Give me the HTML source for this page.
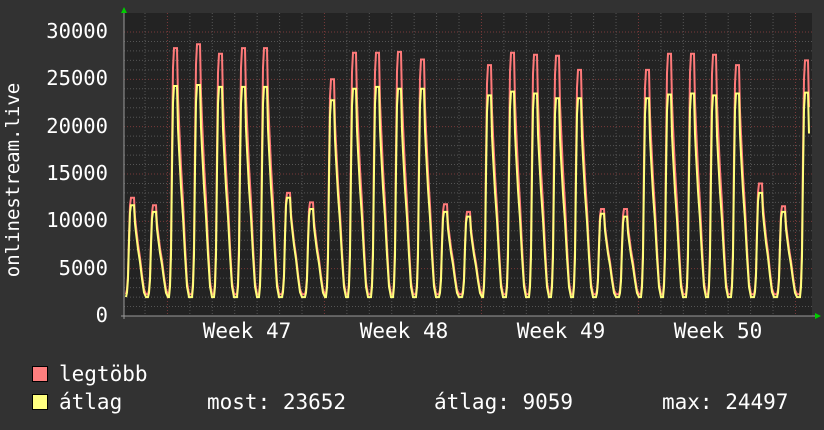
<!DOCTYPE html>
<html><head><meta charset="utf-8"><style>
html,body{margin:0;padding:0;background:#333;}
svg{display:block}
text{font-family:"DejaVu Sans Mono","Liberation Mono",monospace;fill:#fff}
</style></head><body>
<svg id="g" width="824" height="430" xmlns="http://www.w3.org/2000/svg">
<rect width="824" height="430" fill="#323232"/>
<rect x="124" y="13" width="688" height="303" fill="#232323"/>
<g id="grid"></g>
<path id="mx" d="" fill="none" stroke="#ff7a7a" stroke-width="2"/>
<path id="av" d="" fill="none" stroke="#ffff7c" stroke-width="2"/>
<line x1="124" y1="10" x2="124" y2="319" stroke="#999" stroke-width="1"/>
<line x1="121" y1="316" x2="815" y2="316" stroke="#999" stroke-width="1"/>
<polygon points="121,13 127,13 124,7" fill="#00cc00"/>
<polygon points="815,313 815,319 821,316" fill="#00cc00"/>
<g font-size="20.5" text-anchor="end">
<text x="108" y="38">30000</text><text x="108" y="85">25000</text><text x="108" y="133">20000</text>
<text x="108" y="180">15000</text><text x="108" y="227">10000</text><text x="108" y="275">5000</text>
<text x="108" y="322">0</text>
</g>
<text transform="translate(19,180) rotate(-90)" font-size="19" text-anchor="middle">onlinestream.live</text>
<g font-size="21" text-anchor="middle">
<text x="247" y="338">Week 47</text><text x="404" y="338">Week 48</text>
<text x="561" y="338">Week 49</text><text x="718" y="338">Week 50</text>
</g>
<rect x="32.5" y="366.5" width="15" height="15" fill="#ff7f7f" stroke="#000"/>
<rect x="32.5" y="394.5" width="15" height="15" fill="#ffff7f" stroke="#000"/>
<g font-size="21">
<text x="59" y="381">legtöbb</text>
<text x="59" y="409">átlag</text>
<text x="207" y="409">most: 23652</text>
<text x="434" y="409">átlag: 9059</text>
<text x="662" y="409">max: 24497</text>
</g>
</svg>
<script>
var Y=function(v){return 316-v*284/30000;};
var g='';
for(var v=1000;v<=30000;v+=1000){var y=Y(v);var maj=v%5000==0;
g+='<line x1="124" x2="812" y1="'+y+'" y2="'+y+'" stroke="'+(maj?'#7a3a3a':'#555')+'" stroke-dasharray="1,2"/>';}
for(var i=0;i<31;i++){var x=145+i*22.43;if(x>812)break;var maj=((i-1)%7==0);
g+='<line y1="13" y2="316" x1="'+x+'" x2="'+x+'" stroke="'+(maj?'#7a3a3a':'#555')+'" stroke-dasharray="1,2"/>';}
document.getElementById('grid').innerHTML=g;
var P=[[133,12500,11700],[155,11700,11000],[176,28300,24300],[199,28700,24400],[221,27700,24200],[244,28300,24200],[266,28300,24200],[289,13000,12500],[312,12000,11300],[333,25000,22800],[355,27800,24000],[378,27800,24200],[400,27900,24000],[423,27100,24000],[446,11800,11000],[469,11000,10500],[490,26500,23300],[513,27800,23700],[536,27600,23500],[558,27500,23000],[580,26000,23000],[603,11300,10800],[626,11300,10500],[648,26000,23000],[670,27700,23400],[693,27700,23500],[715,27600,23300],[738,26500,23500],[761,14000,13000],[784,11600,11000],[807,27000,23600]];
var sh=[[-7,0],[-6,0.05],[-5,0.2],[-4,0.6],[-3,0.92],[-2,1],[1,1],[2,0.8],[3,0.7],[5,0.52],[7,0.38],[9,0.2],[11,0.05],[13,0]];
function build(k,base){var d='';for(var j=0;j<P.length;j++){var p=P[j];
for(var s=0;s<sh.length;s++){var x=p[0]+sh[s][0];if(x<124||x>809)continue;
var v=base+(p[k]-base)*sh[s][1];d+=(d?'L':'M')+x+','+Y(v).toFixed(1);}}
return d;}
document.getElementById('mx').setAttribute('d',build(1,2300));
document.getElementById('av').setAttribute('d',build(2,2000));
</script>
</body></html>
